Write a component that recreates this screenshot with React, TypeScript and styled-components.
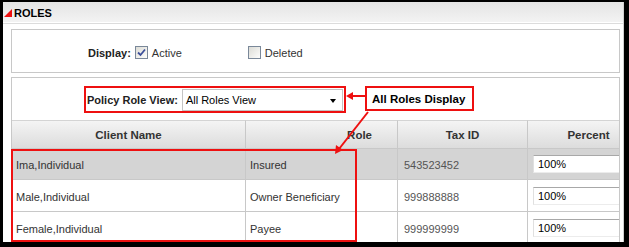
import { Fragment } from "react";
import styled, { createGlobalStyle } from "styled-components";

const Global = createGlobalStyle`
  html, body {
    margin: 0;
    padding: 0;
    background: #000;
  }
  * {
    box-sizing: border-box;
  }
`;

const RED = "#ee1010";

const Frame = styled.div`
  width: 629px;
  height: 247px;
  background: #000;
  padding: 2px 5px 5px 3px;
  font-family: "Liberation Sans", Arial, sans-serif;
  font-size: 11px;
  color: #333;
`;
const Window = styled.div`
  position: relative;
  height: 100%;
  background: #fff;
  overflow: hidden;
  border-right: 1px solid #d0d0d0;
`;
const TitleBar = styled.div`
  height: 20px;
  display: flex;
  align-items: center;
  gap: 2px;
  padding-left: 1px;
  background: linear-gradient(#e4e4e4, #f3f3f3);
`;
const Triangle = styled.span`
  width: 0;
  height: 0;
  border-left: 8px solid transparent;
  border-bottom: 8px solid ${RED};
  margin-top: 1px;
`;
const Title = styled.span`
  font-weight: bold;
  font-size: 11px;
  color: #000;
  padding-top: 1px;
`;
const Rule = styled.div`
  height: 1px;
  margin-top: 1px;
  background: #dcdcdc;
`;
const Content = styled.div`
  padding: 0 3px 0 8px;
`;
const DisplayPanel = styled.div`
  margin-top: 5px;
  height: 44px;
  border: 1px solid #c8c8c8;
  display: flex;
  align-items: center;
  padding: 3px 0 0 76px;
  gap: 4px;
`;
const Label = styled.span`
  font-weight: bold;
  color: #222;
`;
const CheckItem = styled.label<{ $offset?: number }>`
  display: flex;
  align-items: center;
  gap: 4px;
  margin-left: ${(p) => p.$offset ?? 0}px;
  color: #333;
`;
const Box = styled.span`
  width: 13px;
  height: 13px;
  border: 1px solid #7a8899;
  background: linear-gradient(135deg, #dcdcd6, #fdfdfc);
  display: flex;
  align-items: center;
  justify-content: center;
`;
const RolesPanel = styled.div`
  margin-top: 4px;
  border-top: 1px solid #c8c8c8;
  border-left: 1px solid #c8c8c8;
  border-right: 1px solid #c8c8c8;
  overflow: hidden;
`;
const FilterRow = styled.div`
  height: 42px;
  display: flex;
  align-items: center;
  padding-left: 75px;
  gap: 4px;
  padding-top: 1px;
`;
const FakeSelect = styled.div`
  width: 161px;
  height: 22px;
  border: 1px solid #c4c4c4;
  display: flex;
  align-items: center;
  justify-content: space-between;
  padding: 1px 6px 0 3px;
  color: #000;
  font-size: 11px;
`;
const Caret = styled.span`
  width: 0;
  height: 0;
  border-left: 3px solid transparent;
  border-right: 3px solid transparent;
  border-top: 4px solid #000;
  margin-top: 2px;
`;
const Grid = styled.div`
  width: 638px;
  display: grid;
  grid-template-columns: 234px 152px 130px 122px;
`;
const HeadCell = styled.div<{ $align?: string; $pad?: number }>`
  height: 29px;
  border-top: 1px solid #d4d4d4;
  border-right: 1px solid #c8c8c8;
  border-bottom: 1px solid #c8c8c8;
  background: linear-gradient(#f4f4f4, #dcdcdc);
  display: flex;
  align-items: center;
  justify-content: ${(p) => p.$align ?? "center"};
  padding-right: ${(p) => p.$pad ?? 0}px;
  font-weight: bold;
  font-size: 11.5px;
  color: #333;
`;
const Cell = styled.div<{ $h: number; $shade?: boolean }>`
  height: ${(p) => p.$h}px;
  border-right: 1px solid #c8c8c8;
  border-bottom: 1px solid #c8c8c8;
  background: ${(p) => (p.$shade ? "#d4d4d4" : "#fff")};
  display: flex;
  align-items: center;
  padding: 2px 0 0 4px;
  color: #333;
`;
const Num = styled.span`
  padding-left: 2px;
  color: #555;
`;
const Percent = styled.div`
  width: 100px;
  height: 18px;
  margin: -2px 0 0 1px;
  background: #fff;
  border-top: 1px solid #a8a8a8;
  border-left: 1px solid #e0e0e0;
  border-bottom: 1px solid #ececec;
  display: flex;
  align-items: center;
  padding-left: 4px;
  color: #000;
`;
const Outline = styled.div<{ $x: number; $y: number; $w: number; $h: number }>`
  position: absolute;
  left: ${(p) => p.$x}px;
  top: ${(p) => p.$y}px;
  width: ${(p) => p.$w}px;
  height: ${(p) => p.$h}px;
  border: 2px solid ${RED};
  pointer-events: none;
`;
const Callout = styled(Outline)`
  background: #fff;
  display: flex;
  align-items: center;
  padding-left: 5px;
  font-weight: bold;
  font-size: 11.5px;
  color: #000;
`;
const Arrows = styled.svg`
  position: absolute;
  left: 0;
  top: 0;
  pointer-events: none;
`;

const rows = [
  { name: "Ima,Individual", role: "Insured", tax: "543523452", h: 31, shade: true },
  { name: "Male,Individual", role: "Owner Beneficiary", tax: "999888888", h: 32 },
  { name: "Female,Individual", role: "Payee", tax: "999999999", h: 32 },
];

function Check({ on }: { on?: boolean }) {
  return (
    <Box>
      {on && (
        <svg width="9" height="9" viewBox="0 0 9 9">
          <path d="M1 4.5 L3.5 7 L8 1.5" stroke="#3c4f9a" strokeWidth="1.8" fill="none" />
        </svg>
      )}
    </Box>
  );
}

export default function App() {
  return (
    <>
      <Global />
      <Frame>
        <Window>
          <TitleBar>
            <Triangle />
            <Title>ROLES</Title>
          </TitleBar>
          <Rule />
          <Content>
            <DisplayPanel>
              <Label>Display:</Label>
              <CheckItem>
                <Check on />
                Active
              </CheckItem>
              <CheckItem $offset={62}>
                <Check />
                Deleted
              </CheckItem>
            </DisplayPanel>
            <RolesPanel>
              <FilterRow>
                <Label>Policy Role View:</Label>
                <FakeSelect>
                  All Roles View
                  <Caret />
                </FakeSelect>
              </FilterRow>
              <Grid>
                <HeadCell>Client Name</HeadCell>
                <HeadCell $align="flex-end" $pad={25}>Role</HeadCell>
                <HeadCell>Tax ID</HeadCell>
                <HeadCell>Percent</HeadCell>
                {rows.map((r) => (
                  <Fragment key={r.name}>
                    <Cell $h={r.h} $shade={r.shade}>{r.name}</Cell>
                    <Cell $h={r.h} $shade={r.shade}>{r.role}</Cell>
                    <Cell $h={r.h} $shade={r.shade}><Num>{r.tax}</Num></Cell>
                    <Cell $h={r.h} $shade={r.shade}><Percent>100%</Percent></Cell>
                  </Fragment>
                ))}
              </Grid>
            </RolesPanel>
          </Content>

          <Outline $x={81} $y={84} $w={262} $h={27} />
          <Callout $x={362} $y={84} $w={109} $h={25}>All Roles Display</Callout>
          <Outline $x={8} $y={147} $w={346} $h={93} />
          <Arrows width="621" height="240">
            <line x1="348" y1="94" x2="362" y2="94" stroke={RED} strokeWidth="2" />
            <polygon points="343,94 350,90 350,98" fill={RED} />
            <line x1="365" y1="110" x2="336" y2="147" stroke={RED} strokeWidth="2" />
            <polygon points="332,152 333,143 340,148" fill={RED} />
          </Arrows>
        </Window>
      </Frame>
    </>
  );
}
